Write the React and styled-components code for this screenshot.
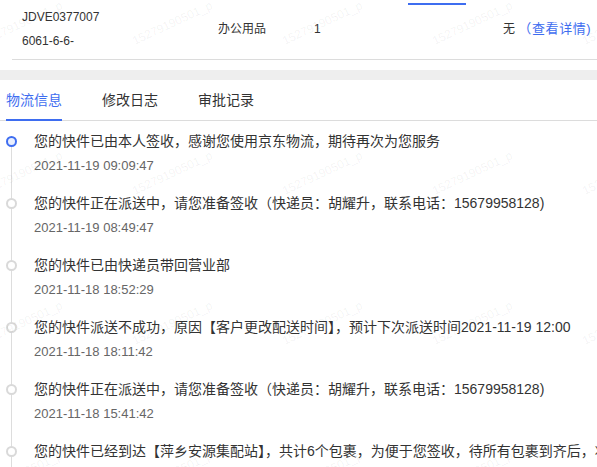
import React from "react";
import styled, { createGlobalStyle } from "styled-components";

const GlobalStyle = createGlobalStyle`
  html, body {
    margin: 0;
    padding: 0;
    overflow: hidden;
    background: #fff;
  }
  body {
    font-family: "Liberation Sans", Arial, "Noto Sans CJK SC", sans-serif;
    color: #333;
  }
  * { box-sizing: border-box; }
`;

const BLUE = "#3e6df0";

const Page = styled.div`
  position: relative;
  width: 597px;
  height: 467px;
  overflow: hidden;
`;

const TopStrip = styled.div`
  height: 5px;
  padding-top: 3px;
  padding-left: 408px;
`;

const TopBar = styled.div`
  width: 58px;
  height: 2px;
  background: ${BLUE};
`;

const OrderRow = styled.div`
  display: grid;
  grid-template-columns: 196px 96px 189px auto;
  align-items: center;
  margin-left: 12px;
  padding-left: 10px;
  padding-bottom: 6px;
  border-bottom: 1px solid #dcdcdc;
  font-size: 12px;
`;

const CodeCell = styled.div`
  line-height: 24px;
  color: #333;
`;

const Cell = styled.div`
  line-height: 24px;
  white-space: nowrap;
`;

const DetailLink = styled.a`
  color: ${BLUE};
  font-size: 13px;
  letter-spacing: 0.6px;
  text-decoration: none;
  cursor: pointer;
`;

const GreyBand = styled.div`
  height: 10px;
  margin-top: 10px;
  background: #eeeeee;
`;

const TabBar = styled.div`
  display: flex;
  gap: 40px;
  padding-left: 6px;
  border-bottom: 1px solid #dcdcdc;
`;

const Tab = styled.div`
  font-size: 14px;
  padding-top: 1px;
  line-height: 38px;
  margin-bottom: -1px;
  color: ${(p) => (p.$active ? BLUE : "#333")};
  border-bottom: 2px solid ${(p) => (p.$active ? BLUE : "transparent")};
  cursor: pointer;
`;

const Timeline = styled.div`
  padding-top: 10px;
`;

const Item = styled.div`
  display: grid;
  grid-template-columns: 11px 1fr;
  column-gap: 17px;
  padding-left: 6px;
`;

const Rail = styled.div`
  position: relative;
  &::before {
    content: "";
    position: absolute;
    left: 5px;
    width: 1px;
    top: ${(p) => (p.$first ? "10px" : "0")};
    bottom: 0;
    background: #dddddd;
  }
`;

const Dot = styled.div`
  position: relative;
  z-index: 1;
  width: 11px;
  height: 11px;
  margin-top: 5px;
  border-radius: 50%;
  border: 2px solid ${(p) => (p.$active ? BLUE : "#d9d9d9")};
  background: ${(p) => (p.$active ? "#e9effe" : "#fff")};
`;

const Content = styled.div`
  padding-bottom: 17px;
`;

const Title = styled.div`
  font-size: 14px;
  line-height: 20px;
  color: #333;
  white-space: nowrap;
`;

const Time = styled.div`
  font-size: 13px;
  line-height: 20px;
  margin-top: 5px;
  color: #666;
`;

const Watermark = styled.div`
  position: absolute;
  top: -52px;
  left: -53px;
  display: grid;
  grid-template-columns: repeat(5, 150px);
  grid-auto-rows: 150px;
  pointer-events: none;
  z-index: 2;
`;

const Mark = styled.div`
  display: flex;
  align-items: center;
  justify-content: center;
  span {
    font-size: 12px;
    color: rgba(0, 0, 0, 0.06);
    transform: rotate(-25deg);
    white-space: nowrap;
  }
`;

const events = [
  {
    text: "您的快件已由本人签收，感谢您使用京东物流，期待再次为您服务",
    time: "2021-11-19 09:09:47",
  },
  {
    text: "您的快件正在派送中，请您准备签收（快递员：胡耀升，联系电话：15679958128)",
    time: "2021-11-19 08:49:47",
  },
  { text: "您的快件已由快递员带回营业部", time: "2021-11-18 18:52:29" },
  {
    text: "您的快件派送不成功，原因【客户更改配送时间】，预计下次派送时间2021-11-19 12:00",
    time: "2021-11-18 18:11:42",
  },
  {
    text: "您的快件正在派送中，请您准备签收（快递员：胡耀升，联系电话：15679958128)",
    time: "2021-11-18 15:41:42",
  },
  {
    text: "您的快件已经到达【萍乡安源集配站】，共计6个包裹，为便于您签收，待所有包裹到齐后，将为您一并派送",
    time: "2021-11-18 12:20:16",
  },
];

export default function App() {
  return (
    <Page>
      <GlobalStyle />
      <TopStrip>
        <TopBar />
      </TopStrip>
      <OrderRow>
        <CodeCell>
          <div>JDVE0377007</div>
          <div>6061-6-6-</div>
        </CodeCell>
        <Cell>办公用品</Cell>
        <Cell>1</Cell>
        <Cell>
          无 <DetailLink>（查看详情)</DetailLink>
        </Cell>
      </OrderRow>
      <GreyBand />
      <TabBar>
        <Tab $active>物流信息</Tab>
        <Tab>修改日志</Tab>
        <Tab>审批记录</Tab>
      </TabBar>
      <Timeline>
        {events.map((e, i) => (
          <Item key={i}>
            <Rail $first={i === 0}>
              <Dot $active={i === 0} />
            </Rail>
            <Content>
              <Title>{e.text}</Title>
              <Time>{e.time}</Time>
            </Content>
          </Item>
        ))}
      </Timeline>
      <Watermark>
        {Array.from({ length: 20 }).map((_, i) => (
          <Mark key={i}>
            <span>15279190501_p</span>
          </Mark>
        ))}
      </Watermark>
    </Page>
  );
}
